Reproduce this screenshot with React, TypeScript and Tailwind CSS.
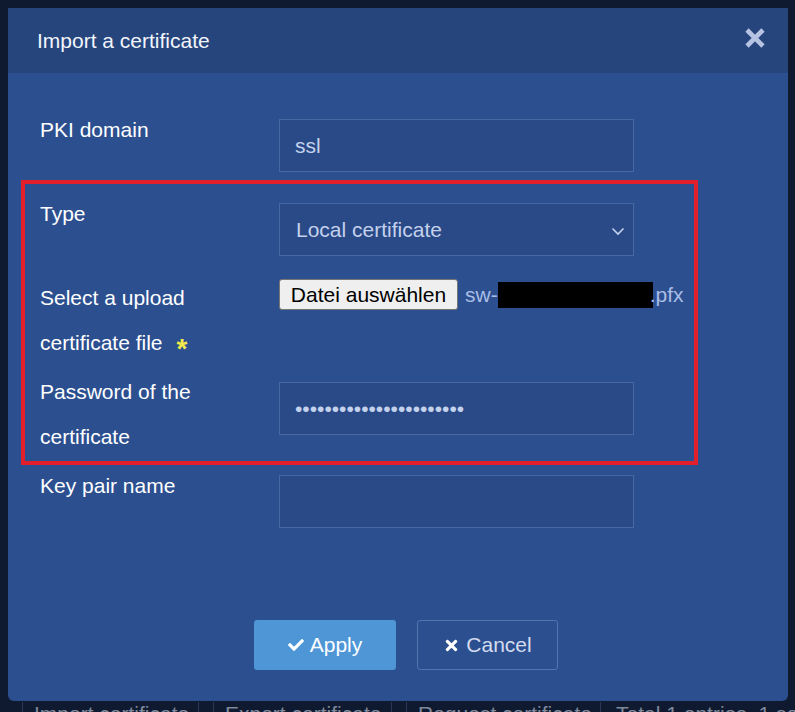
import { FaCheck, FaTimes } from "react-icons/fa";

// ─── Small pieces ───────────────────────────────────────────────────────────

function TextBox({ value, password }: { value?: string; password?: boolean }) {
  return (
    <input
      readOnly
      type={password ? "password" : "text"}
      value={value ?? ""}
      className="h-[53px] w-[355px] border border-[#4868a3] bg-[#2a4a87] pl-[15px] text-[21px] text-[#c4d1ec] outline-none"
    />
  );
}

function Row({
  label,
  height,
  offset,
  children,
}: {
  label: React.ReactNode;
  height: string;
  offset: string;
  children: React.ReactNode;
}) {
  return (
    <div className={`flex ${height}`}>
      <div className="w-[239px] shrink-0 text-[21px] leading-[45px] text-white">{label}</div>
      <div className={offset}>{children}</div>
    </div>
  );
}

// ─── Page ───────────────────────────────────────────────────────────────────

export default function App() {
  return (
    <div className="relative h-[712px] w-[795px] overflow-hidden bg-[#0f1a31] pl-2 pt-2 font-['Liberation_Sans',Arial,sans-serif]">
      <div className="flex h-[693px] w-[780px] flex-col rounded-b-md bg-[#2c4f8f]">
        {/* header */}
        <div className="flex h-[65px] shrink-0 items-center justify-between bg-[#26457d] pl-[29px] pr-[22px]">
          <span className="text-[21px] text-[#f2f5fb]">Import a certificate</span>
          <svg width="22" height="22" viewBox="0 0 22 22" className="-mt-[5px]">
            <path d="M3 3 L19 19 M19 3 L3 19" stroke="#b6c3e2" strokeWidth="4.6" />
          </svg>
        </div>

        {/* form */}
        <div className="flex flex-1 flex-col pl-[32px] pt-[34px]">
          <Row label="PKI domain" height="h-[84px]" offset="mt-[12px]">
            <TextBox value="ssl" />
          </Row>
          <Row label="Type" height="h-[84px]" offset="mt-[12px]">
            <div className="flex h-[53px] w-[355px] items-center justify-between border border-[#4868a3] bg-[#2a4a87] pl-[16px] pr-[8px] text-[21px] text-[#c4d1ec]">
              <span>Local certificate</span>
              <svg width="14" height="10" viewBox="0 0 14 10" className="mt-[2px]">
                <path d="M1.5 2.5 L7 8 L12.5 2.5" fill="none" stroke="#c4d1ec" strokeWidth="1.6" />
              </svg>
            </div>
          </Row>
          <Row
            label={
              <>
                Select a upload
                <br />
                certificate file
                <span className="relative top-[8px] ml-[14px] text-[28px] font-bold leading-none text-[#f3e94a]">
                  *
                </span>
              </>
            }
            height="h-[94px]"
            offset="mt-[4px]"
          >
            <div className="flex items-center text-[21px]">
              <button
                type="button"
                className="h-[31px] w-[179px] rounded-[3px] border border-[#767676] bg-[#efefef] text-[21px] leading-none text-black"
              >
                Datei auswählen
              </button>
              <span className="ml-[7px] text-[#a9bde6]">sw-</span>
              <span className="h-[26px] w-[155px] bg-black" />
              <span className="-ml-[3px] text-[#a9bde6]">.pfx</span>
            </div>
          </Row>
          <Row
            label={
              <>
                Password of the
                <br />
                certificate
              </>
            }
            height="h-[94px]"
            offset="mt-[13px]"
          >
            <TextBox password value="xxxxxxxxxxxxxxxxxxxxxxx" />
          </Row>
          <Row label="Key pair name" height="h-[84px]" offset="mt-[12px]">
            <TextBox />
          </Row>
        </div>

        {/* footer */}
        <div className="flex gap-[21px] pb-[31px] pl-[246px]">
          <button
            type="button"
            className="flex h-[50px] w-[142px] items-center justify-center gap-[6px] rounded-[3px] bg-[#4e96d6] text-[21px] text-white"
          >
            <FaCheck size={16} />
            Apply
          </button>
          <button
            type="button"
            className="flex h-[50px] w-[141px] items-center justify-center gap-[6px] rounded-[3px] border border-[#5574ad] text-[21px] text-[#d3dcf0]"
          >
            <FaTimes size={17} className="text-white" />
            Cancel
          </button>
        </div>
      </div>

      {/* page content behind the dialog */}
      <div className="ml-[14px] flex h-[20px] whitespace-nowrap pt-[1px] text-[21px] leading-[24px] text-[#7f899c]">
        <span className="w-[177px] shrink-0 border-x border-[#2a3755] pl-[11px]">Import certificate</span>
        <span className="ml-[14px] w-[179px] shrink-0 border-x border-[#2a3755] pl-[11px]">Export certificate</span>
        <span className="ml-[14px] w-[195px] shrink-0 border-x border-[#2a3755] pl-[11px]">Request certificate</span>
        <span className="shrink-0 pl-[15px]">Total 1 entries, 1 selected</span>
      </div>

      {/* annotation frame */}
      <div className="pointer-events-none absolute left-[21px] top-[180px] h-[285px] w-[677px] border-[4px] border-[#e1202b]" />
    </div>
  );
}
